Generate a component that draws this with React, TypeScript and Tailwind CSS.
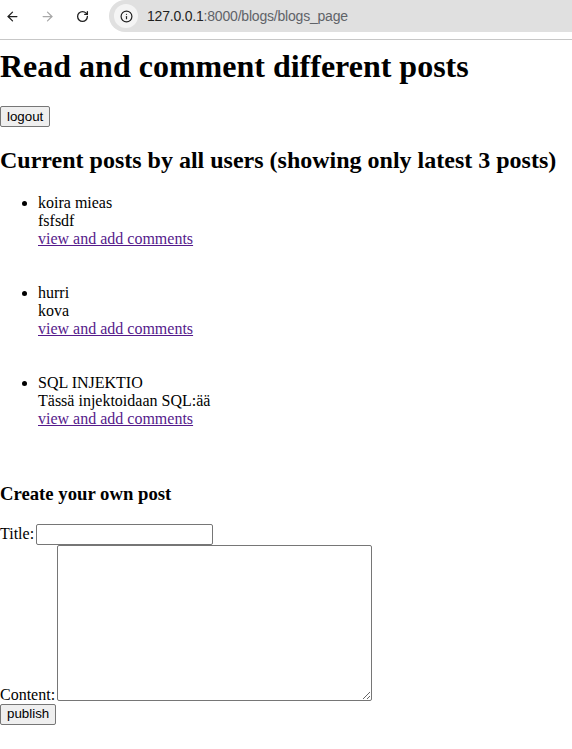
import { ArrowLeft, ArrowRight, RotateCw, Info } from 'lucide-react';

const posts = [
  { title: 'koira mieas', content: 'fsfsdf' },
  { title: 'hurri', content: 'kova' },
  { title: 'SQL INJEKTIO', content: 'Tässä injektoidaan SQL:ää' },
];

function BrowserBar() {
  return (
    <div className="h-[40px] border-b border-[#c7c7c7] flex items-start bg-white">
      {/* nav buttons */}
      <div className="flex items-center h-[32px] w-[109px] shrink-0">
        <ArrowLeft className="w-[15px] h-[15px] ml-[5px] text-[#1f1f1f]" strokeWidth={2} />
        <ArrowRight className="w-[15px] h-[15px] ml-[20px] text-[#a8a8a8]" strokeWidth={2} />
        <RotateCw className="w-[13px] h-[13px] ml-[21px] text-[#1f1f1f]" strokeWidth={2.4} />
      </div>
      {/* address pill */}
      <div className="flex-1 h-[32px] bg-[#e0e0e0] rounded-l-full flex items-center pl-[5px]">
        <div className="w-[24px] h-[24px] rounded-full bg-[#f4f4f4] flex items-center justify-center">
          <Info className="w-[13px] h-[13px] text-[#1f1f1f]" strokeWidth={2.2} />
        </div>
        <span className="ml-[9px] text-[14px] font-['Liberation_Sans',Arial,sans-serif] tracking-[-0.2px]">
          <span className="text-[#1f1f1f]">127.0.0.1</span>
          <span className="text-[#5f6368]">:8000/blogs/blogs_page</span>
        </span>
      </div>
    </div>
  );
}

function NativeButton({ children }: { children: string }) {
  return (
    <button className="h-[21px] px-[6px] bg-[#efefef] border border-[#767676] rounded-[2px] text-[13.33px] leading-[16px] text-black font-['Liberation_Sans',Arial,sans-serif]">
      {children}
    </button>
  );
}

export default function App() {
  return (
    <div className="min-h-[749px] bg-white text-black font-['Liberation_Serif','Times_New_Roman',serif] text-[16px] leading-[18px]">
      <BrowserBar />

      <h1 className="text-[32px] font-bold leading-[37px] mt-[8px]">Read and comment different posts</h1>

      <div className="mt-[21px] h-[21px]">
        <NativeButton>logout</NativeButton>
      </div>

      <h2 className="text-[24px] font-bold leading-[27px] mt-[20px]">
        Current posts by all users (showing only latest 3 posts)
      </h2>

      <ul className="list-disc pl-[38px] mt-[20px]">
        {posts.map((p) => (
          <li key={p.title} className="pb-[36px]">
            <div>{p.title}</div>
            <div>{p.content}</div>
            <a href="#" className="text-[#551a8b] underline">
              view and add comments
            </a>
          </li>
        ))}
      </ul>

      <h3 className="text-[18.72px] font-bold leading-[22px] mt-[19px]">Create your own post</h3>

      <form className="mt-[18.6px]">
        <div className="flex items-center h-[21px]">
          <span>Title:</span>
          <input
            type="text"
            className="ml-[2px] w-[177px] h-[21px] border border-[#767676] rounded-[2px] px-[2px] text-[13.33px] font-['Liberation_Sans',Arial,sans-serif]"
          />
        </div>
        <div className="flex items-end">
          <span className="-mb-[3px]">Content:</span>
          <textarea className="ml-[2px] w-[315px] h-[156px] border border-[#767676] rounded-[2px] p-[2px] text-[13.33px] font-['Liberation_Mono',monospace]" />
        </div>
        <div className="mt-[3px] h-[21px]">
          <NativeButton>publish</NativeButton>
        </div>
      </form>
    </div>
  );
}
